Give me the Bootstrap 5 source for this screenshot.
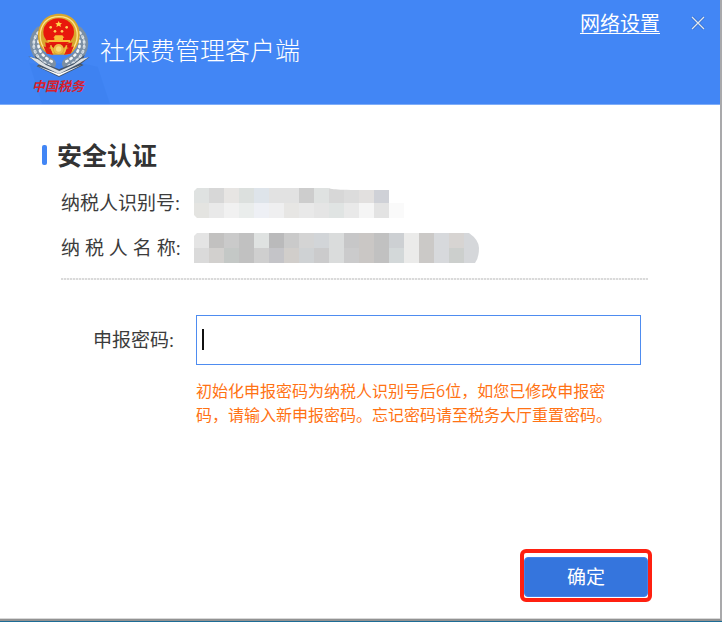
<!DOCTYPE html>
<html lang="zh-CN">
<head>
<meta charset="utf-8">
<meta name="viewport" content="width=device-width, initial-scale=1">
<title>社保费管理客户端</title>
<link href="https://cdn.jsdelivr.net/npm/bootstrap@5.3.0/dist/css/bootstrap.min.css" rel="stylesheet">
<style>
  body { font-family: "Open Sans", "Noto Sans CJK SC", sans-serif; font-size: 19px; line-height: 24px; color: #3c3c3c; background: #fff; }
  .client-window { border-right: 2px solid #a9a9ab; border-bottom: 2px solid #929292; box-shadow: inset 0 -1px #d8d8d8; }
  .desktop-edge { height: 1px; background: #1c6c96; }
  .title-bar { background: #4286f5; height: 105px; padding: 5px 12px 0 20px; border-bottom: 1px solid #7fadf8; color: #fff; }
  .emblem { width: 80px; height: 99px; overflow: visible; }
  .app-title { font-size: 25px; line-height: 30px; font-weight: 300; padding-top: 30px; }
  .settings-link { font-size: 20px; line-height: 24px; margin: 7px 28px 0 0; color: #fff; text-underline-offset: 2px; text-decoration-thickness: 1px; }
  .settings-link:hover { color: #dce9ff; }
  .close-btn { width: 20px; height: 20px; margin-top: 8px; }
  .content-area { padding: 35px 72px 17px 42px; }
  .section-title { font-size: 25px; line-height: 30px; color: #333; }
  .section-title::before { content: ""; width: 5px; height: 20px; border-radius: 2px; background: #4286f5; margin: 0 10px 0 0; }
  .info-list { padding-left: 19px; margin-top: 18px; gap: 15px; }
  .info-list dt { width: 133px; white-space: nowrap; font-weight: 400; }
  .info-list svg { display: block; flex-shrink: 0; }
  .separator { height: 2px; margin: 15px 0 35px 19px; background: repeating-linear-gradient(90deg, #dadada 0 2px, #f4f4f4 2px 3px); }
  .field-label { width: 154px; padding-left: 51px; white-space: nowrap; }
  .field-body { padding-right: 7px; }
  .pwd-input { height: 50px; border: 1px solid #4e8cf0; border-radius: 0; font-size: 19px; padding: 6px; }
  .text-caret { left: 6px; top: 14px; width: 2px; height: 21px; background: #111; }
  .hint { font-size: 16px; line-height: 24px; color: #ff7214; margin: 14px 0 0 154px; max-width: 424px; }
  .confirm-frame { width: 132px; border: 4px solid #ff2010; border-radius: 6px; padding: 4px 0 1px; margin-right: -4px; }
  .confirm-btn { height: 40px; font-size: 19px; line-height: 24px; border-radius: 4px; background: #3575dd; border: 1px solid #4583e8; color: #fff; padding: 0; }
  .confirm-btn:hover { background: #2c69ce; color: #fff; }
</style>
</head>
<body>
<div class="min-vh-100 d-flex flex-column">
  <div class="client-window flex-grow-1 d-flex flex-column">
    <header class="title-bar d-flex align-items-start">
      <svg class="emblem flex-shrink-0" viewBox="0 0 240 297" role="img" aria-label="中国税务">
        <path d="M28 175L185 175L233 185L270 297L66 297Z" fill="#2b6edf" opacity=".16"/>
        <!-- grain wreath -->
        <g fill="none" stroke-linecap="round">
          <path d="M60 80C34 108 42 153 92 176M174 80C200 108 192 153 142 176" stroke="#7c8fa3" stroke-width="32"/>
          <path d="M55 82C29 112 39 158 88 182M179 82C205 112 195 158 146 182" stroke="#dfe5ea" stroke-width="8" stroke-dasharray="4 11"/>
          <path d="M64 86C46 116 54 148 96 170M170 86C188 116 180 148 138 170" stroke="#f1f4f6" stroke-width="8" stroke-dasharray="4 11" stroke-dashoffset="7"/>
          <path d="M48 92C33 116 42 154 79 178M186 92C201 116 192 154 155 178" stroke="#bcc8d2" stroke-width="5" stroke-dasharray="3 9"/>
        </g>
        <!-- ribbon -->
        <path d="M25 154L47 160L43 151L73 175L117 193L163 174L194 149L190 161L209 156L183 176L191 180L117 216L50 184L57 178Z" fill="#46566a"/>
        <path d="M28 155L53 162L78 180L118 198L160 179L184 161L206 157L181 173L117 207L57 178Z" fill="#dde1e4"/>
        <path d="M52 183L117 207L186 179L117 213Z" fill="#fff"/>
        <!-- national emblem -->
        <path d="M79 144C46 120 48 70 71 45C93 21 140 19 163 45C187 71 184 120 155 145L139 149H94Z" fill="#d9a72d"/>
        <path d="M78 136C54 112 56 72 76 50C96 30 138 30 157 50C178 73 176 111 155 136" fill="none" stroke="#ffe38a" stroke-width="4"/>
        <ellipse cx="116" cy="81" rx="46" ry="41" fill="#e8180c"/>
        <path d="M116 48L119 54L126 55L121 59L123 66L116 62L109 66L111 59L106 55L113 54Z" fill="#ffd84d"/>
        <g fill="#ffd05a"><circle cx="92" cy="67" r="4"/><circle cx="140" cy="67" r="4"/><circle cx="105" cy="79" r="4"/><circle cx="126" cy="79" r="4"/></g>
        <path d="M100 98L106 91H127L133 98H129V105H150V111H82V105H103V98Z" fill="#f9bd36"/>
        <path d="M76 112C92 119 142 119 157 112L153 131L136 125L119 138L114 138L96 125L78 131Z" fill="#db160d"/>
        <circle cx="116" cy="132" r="15" fill="#edbd47"/><circle cx="116" cy="132" r="8" fill="#f8dc78"/>
        <path d="M70 124L92 131L100 149L80 146ZM162 124L140 131L132 149L152 146Z" fill="#e32013"/>
        <path d="M92 121L100 145M140 121L132 145" stroke="#f3bd3c" stroke-width="5"/>
        <text x="36" y="257" font-family="Noto Sans CJK SC, sans-serif" font-size="39" font-weight="700" font-style="italic" fill="#d8202c">中国税务</text>
      </svg>
      <h1 class="app-title mb-0 text-nowrap">社保费管理客户端</h1>
      <a href="#" class="settings-link ms-auto text-nowrap">网络设置</a>
      <button type="button" class="close-btn btn p-0 border-0 d-flex align-items-center justify-content-center" aria-label="关闭">
        <svg width="14" height="14" viewBox="0 0 14 14" fill="none"><path d="M1 1L13 13M13 1L1 13" stroke="#2e62b5" stroke-width="3" opacity=".5"/><path d="M1 1L13 13M13 1L1 13" stroke="#e3e8ee" stroke-width="1.2"/></svg>
      </button>
    </header>

    <main class="content-area flex-grow-1 d-flex flex-column">
      <h2 class="section-title fw-bold d-flex align-items-center mb-0">安全认证</h2>
      <dl class="info-list mb-0 d-flex flex-column">
        <div class="d-flex align-items-center">
          <dt>纳税人识别号:</dt>
          <dd class="mb-0">
            <svg width="210" height="30" viewBox="0 0 210 30" shape-rendering="crispEdges" role="img" aria-label="已隐藏">
              <defs><clipPath id="maskA"><path d="M3 0H134C141 2 148 2 195 2V15H210V30H3L0 27V3Z"/></clipPath></defs>
              <g clip-path="url(#maskA)">
                <path fill="#dfe2e1" d="M0 0h15v15H0zM120 0h15v15h-15z"/><path fill="#d7d7d7" d="M15 0h15v15H15zM135 0h15v15h-15z"/><path fill="#e7e5e3" d="M30 0h15v15H30z"/><path fill="#dce0de" d="M45 0h15v15H45z"/><path fill="#dee4ea" d="M60 0h15v15H60z"/><path fill="#e2e2e2" d="M75 0h30v15H75z"/><path fill="#cdcdcd" d="M105 0h15v15h-15z"/><path fill="#dcdcdc" d="M150 0h15v15h-15z"/><path fill="#e2e0df" d="M165 0h15v15h-15z"/><path fill="#cfd1d7" d="M180 0h15v15h-15z"/>
                <path fill="#e4e4e1" d="M0 15h15v15H0z"/><path fill="#e9e9e9" d="M15 15h15v15H15zM105 15h15v15h-15zM150 15h15v15h-15z"/><path fill="#f1f1f1" d="M30 15h15v15H30z"/><path fill="#eaedec" d="M45 15h15v15H45z"/><path fill="#eef0f5" d="M60 15h15v15H60z"/><path fill="#efeff0" d="M75 15h15v15H75z"/><path fill="#e7e6e4" d="M90 15h15v15H90z"/><path fill="#e5e5e5" d="M120 15h15v15h-15z"/><path fill="#e0e4e3" d="M135 15h15v15h-15z"/><path fill="#f5f5f5" d="M165 15h15v15h-15z"/><path fill="#e3e3e3" d="M180 15h15v15h-15z"/><path fill="#fafafa" d="M195 15h15v15h-15z"/>
              </g>
            </svg>
          </dd>
        </div>
        <div class="d-flex align-items-center">
          <dt>纳 税 人 名 称:</dt>
          <dd class="mb-0">
            <svg width="285" height="30" viewBox="0 0 285 30" shape-rendering="crispEdges" role="img" aria-label="已隐藏">
              <defs><clipPath id="maskB"><path d="M3 0H275Q285 7 285 15Q285 25 281 30H0V3Z"/></clipPath></defs>
              <g clip-path="url(#maskB)">
                <path fill="#e4e4e4" d="M0 0h15v15H0z"/><path fill="#c2c1c0" d="M15 0h15v15H15z"/><path fill="#cacaca" d="M30 0h15v15H30zM90 0h15v15H90z"/><path fill="#c1c1c1" d="M45 0h15v30H45zM180 0h15v30h-15z"/><path fill="#dfe2e1" d="M60 0h15v15H60z"/><path fill="#bababb" d="M75 0h15v15H75z"/><path fill="#d4d4d4" d="M105 0h15v15h-15z"/><path fill="#d2d5d8" d="M120 0h15v15h-15z"/><path fill="#dadcdc" d="M135 0h15v30h-15z"/><path fill="#c7c7c8" d="M150 0h15v15h-15z"/><path fill="#cac7c5" d="M165 0h15v30h-15z"/><path fill="#cdd0d3" d="M195 0h15v15h-15z"/><path fill="#ebebea" d="M210 0h15v30h-15z"/><path fill="#cbc9c7" d="M225 0h15v30h-15z"/><path fill="#d7d9dc" d="M240 0h15v30h-15z"/><path fill="#d7d4d2" d="M255 0h15v15h-15z"/><path fill="#d5d7da" d="M270 0h15v30h-15z"/>
                <path fill="#dadada" d="M0 15h15v15H0z"/><path fill="#d2d0ce" d="M15 15h15v15H15z"/><path fill="#c4c8c6" d="M30 15h15v15H30z"/><path fill="#cfcfcf" d="M60 15h15v15H60z"/><path fill="#c4c4c8" d="M75 15h15v15H75z"/><path fill="#d1cecb" d="M90 15h15v15H90z"/><path fill="#cfd2d4" d="M105 15h15v15h-15z"/><path fill="#cbcbcc" d="M120 15h15v15h-15zM150 15h15v15h-15z"/><path fill="#d3d8d9" d="M195 15h15v15h-15z"/><path fill="#cccfcd" d="M255 15h15v15h-15z"/>
              </g>
            </svg>
          </dd>
        </div>
      </dl>
      <div class="separator" role="separator"></div>

      <form class="flex-grow-1 d-flex flex-column">
        <div class="d-flex align-items-center">
          <label class="field-label flex-shrink-0" for="pwd">申报密码:</label>
          <div class="field-body flex-grow-1">
            <div class="position-relative">
              <input type="password" id="pwd" class="pwd-input form-control" aria-describedby="pwdHint">
              <span class="text-caret position-absolute" aria-hidden="true"></span>
            </div>
          </div>
        </div>
        <p class="hint" id="pwdHint">初始化申报密码为纳税人识别号后6位，如您已修改申报密码，请输入新申报密码。忘记密码请至税务大厅重置密码。</p>
        <div class="confirm-frame mt-auto ms-auto">
          <button type="submit" class="confirm-btn btn w-100 d-block">确定</button>
        </div>
      </form>
    </main>
  </div>
  <div class="desktop-edge"></div>
</div>
<script src="https://cdn.jsdelivr.net/npm/bootstrap@5.3.0/dist/js/bootstrap.bundle.min.js"></script>
</body>
</html>
